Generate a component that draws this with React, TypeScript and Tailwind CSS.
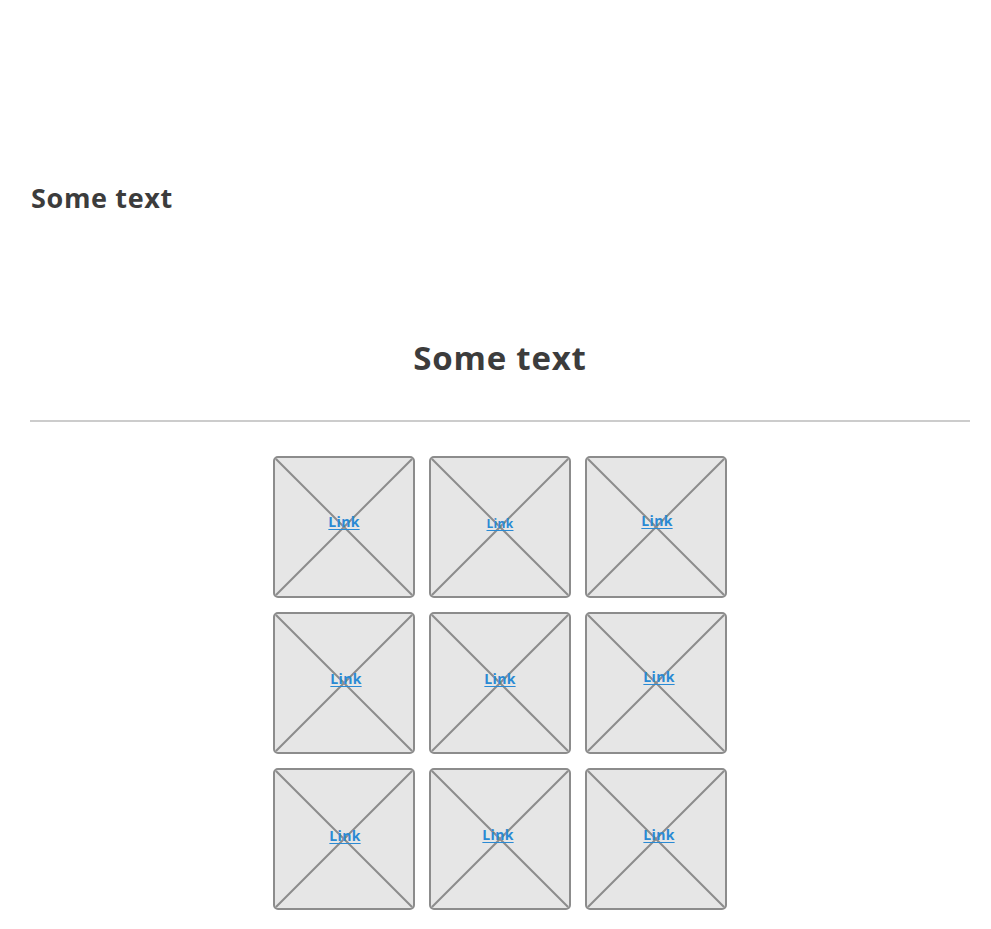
import React from "react";

const links = [
  { cls: "-translate-y-[5px]", size: "text-[14px]" },
  { cls: "-translate-y-[3px]", size: "text-[12px]" },
  { cls: "-translate-y-[6px] translate-x-[1px]", size: "text-[14px]" },
  { cls: "-translate-y-[4px] translate-x-[2px]", size: "text-[14px]" },
  { cls: "-translate-y-[4px]", size: "text-[14px]" },
  { cls: "-translate-y-[6px] translate-x-[3px]", size: "text-[14px]" },
  { cls: "-translate-y-[3px] translate-x-[1px]", size: "text-[14px]" },
  { cls: "-translate-y-[4px] -translate-x-[2px]", size: "text-[14px]" },
  { cls: "-translate-y-[4px] translate-x-[3px]", size: "text-[14px]" },
];

function Tile({ cls, size }: { cls: string; size: string }) {
  return (
    <div className="relative w-[142px] h-[142px] rounded-[5px] border-2 border-[#8c8c8c] bg-[#e6e6e6] flex items-center justify-center overflow-hidden">
      <svg className="absolute inset-0 w-full h-full" viewBox="0 0 138 138" preserveAspectRatio="none">
        <line x1="0" y1="0" x2="138" y2="138" stroke="#8c8c8c" strokeWidth="2" />
        <line x1="138" y1="0" x2="0" y2="138" stroke="#8c8c8c" strokeWidth="2" />
      </svg>
      <a
        href="#"
        className={`relative font-bold underline underline-offset-2 text-[#2a8ad4] leading-none tracking-[0.3px] ${size} ${cls}`}
      >
        Link
      </a>
    </div>
  );
}

export default function App() {
  return (
    <div
      className="w-[991px] min-h-[929px] bg-white text-[#3c3c3c] px-[30px] pr-[21px]"
      style={{ fontFamily: '"Open Sans", "Noto Sans", sans-serif' }}
    >
      <h1 className="pt-[180px] text-[27px] leading-[36px] font-bold tracking-[0.65px] pl-[1px]">Some text</h1>
      <h2 className="mt-[120px] text-[33px] leading-[44px] font-bold text-center tracking-[0.8px]">Some text</h2>
      <hr className="mt-[40px] border-0 h-[2px] bg-[#cccccc]" />
      <div className="mt-[34px] flex justify-center">
        <div className="grid grid-cols-3 gap-[14px]">
          {links.map((l, i) => (
            <Tile key={i} cls={l.cls} size={l.size} />
          ))}
        </div>
      </div>
    </div>
  );
}
